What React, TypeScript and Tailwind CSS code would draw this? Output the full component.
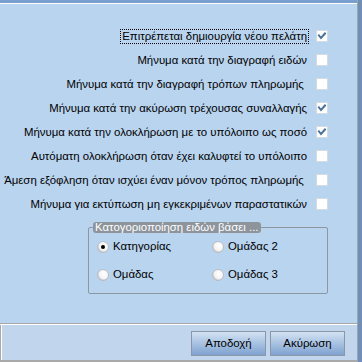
import React from "react";

const rows: { label: string; checked: boolean; focus?: boolean }[] = [
  { label: "Επιτρέπεται δημιουργία νέου πελάτη", checked: true, focus: true },
  { label: "Μήνυμα κατά την διαγραφή ειδών", checked: false },
  { label: "Μήνυμα κατά την διαγραφή τρόπων πληρωμής ", checked: false },
  { label: "Μήνυμα κατά την ακύρωση τρέχουσας συναλλαγής", checked: true },
  { label: "Μήνυμα κατά την ολοκλήρωση με το υπόλοιπο ως ποσό", checked: true },
  { label: "Αυτόματη ολοκλήρωση όταν έχει καλυφτεί το υπόλοιπο", checked: false },
  { label: "Άμεση εξόφληση όταν ισχύει έναν μόνον τρόπος πληρωμής ", checked: false },
  { label: "Μήνυμα για εκτύπωση μη εγκεκριμένων παραστατικών", checked: false },
];

function Check({ checked }: { checked: boolean }) {
  return (
    <div className="w-[12px] h-[12px] bg-white border border-[#d4dbe3] flex items-center justify-center shrink-0">
      {checked && (
        <svg width="10" height="10" viewBox="0 0 10 10">
          <path d="M2 4.5 L4 7 L8 2.5" fill="none" stroke="#4d6f98" strokeWidth="2" strokeLinecap="square" />
        </svg>
      )}
    </div>
  );
}

function Radio({ checked }: { checked: boolean }) {
  return (
    <svg width="12" height="12" viewBox="0 0 12 12" className="shrink-0">
      <defs>
        <radialGradient id="rg" cx="0.6" cy="0.4" r="0.6">
          <stop offset="0" stopColor="#ffffff" />
          <stop offset="0.7" stopColor="#f4f4f4" />
          <stop offset="1" stopColor="#c8c8c8" />
        </radialGradient>
      </defs>
      <circle cx="6" cy="6" r="5.5" fill="url(#rg)" stroke="#b8bcc2" strokeWidth="1" />
      {checked && <circle cx="6" cy="6" r="2" fill="#000" />}
    </svg>
  );
}

function RadioItem({ label, checked }: { label: string; checked: boolean }) {
  return (
    <div className="flex items-center gap-[4px] h-[28px]">
      <Radio checked={checked} />
      <span>{label}</span>
    </div>
  );
}

export default function App() {
  return (
    <div
      className="w-[362px] h-[362px] flex flex-row text-[11.4px] text-black overflow-hidden"
      style={{ fontFamily: '"Liberation Sans", Arial, sans-serif' }}
    >
      <div className="w-[357px] h-full flex flex-col">
        <div className="h-[3px] bg-[#7a9ed0]" />
        <div className="h-[1px] bg-white" />
        <div className="flex-1 bg-[#b9d4ef] flex flex-col pt-[20px]">
          <div className="flex flex-col pr-[29px]">
            {rows.map((r, i) => (
              <div key={i} className="h-[24px] flex items-center justify-end gap-[7px]">
                <span
                  className={
                    r.focus
                      ? "border border-dotted border-black px-[1px] leading-[13px] whitespace-pre"
                      : "px-[2px] leading-[13px] whitespace-pre"
                  }
                >
                  {r.label}
                </span>
                <Check checked={r.checked} />
              </div>
            ))}
          </div>
          <div className="relative ml-[88px] mt-[11px] w-[240px] h-[67px] border border-[#8e979f] rounded-[2px]">
            <div className="absolute left-[4px] top-[-6px] h-[11px] px-[2px] bg-[#8d949b] rounded-[3px] text-white text-[11.4px] leading-[11px] whitespace-nowrap">
              Κατογοριοποίηση ειδών βάσει ...
            </div>
            <div className="grid grid-cols-[115px_1fr] pl-[8px] pt-[5px]">
              <RadioItem label="Κατηγορίας" checked={true} />
              <RadioItem label="Ομάδας 2" checked={false} />
              <RadioItem label="Ομάδας" checked={false} />
              <RadioItem label="Ομάδας 3" checked={false} />
            </div>
          </div>
        </div>
        <div className="h-[1px] bg-[#a9a9a9]" />
        <div className="h-[1px] bg-white" />
        <div className="h-[35px] bg-[#c1d5ed] border-l border-l-[#a9a9a9] flex">
          <div className="w-[1px] bg-white" />
          <div className="flex-1 flex justify-end items-start pt-[6px] pr-[12px] gap-[4px]">
            <button className="w-[75px] h-[25px] border border-[#8b97a6] bg-gradient-to-b from-[#d2e2f3] to-[#7fa2cf] text-[11.4px]">
              Αποδοχή
            </button>
            <button className="w-[75px] h-[25px] border border-[#8b97a6] bg-gradient-to-b from-[#d2e2f3] to-[#7fa2cf] text-[11.4px]">
              Ακύρωση
            </button>
          </div>
        </div>
        <div className="h-[2px] bg-[#a9a9a9]" />
      </div>
      <div className="w-[1px] h-full bg-[#9aa6b4]" />
      <div className="w-[4px] h-full bg-[#6f8fb9]" />
    </div>
  );
}
